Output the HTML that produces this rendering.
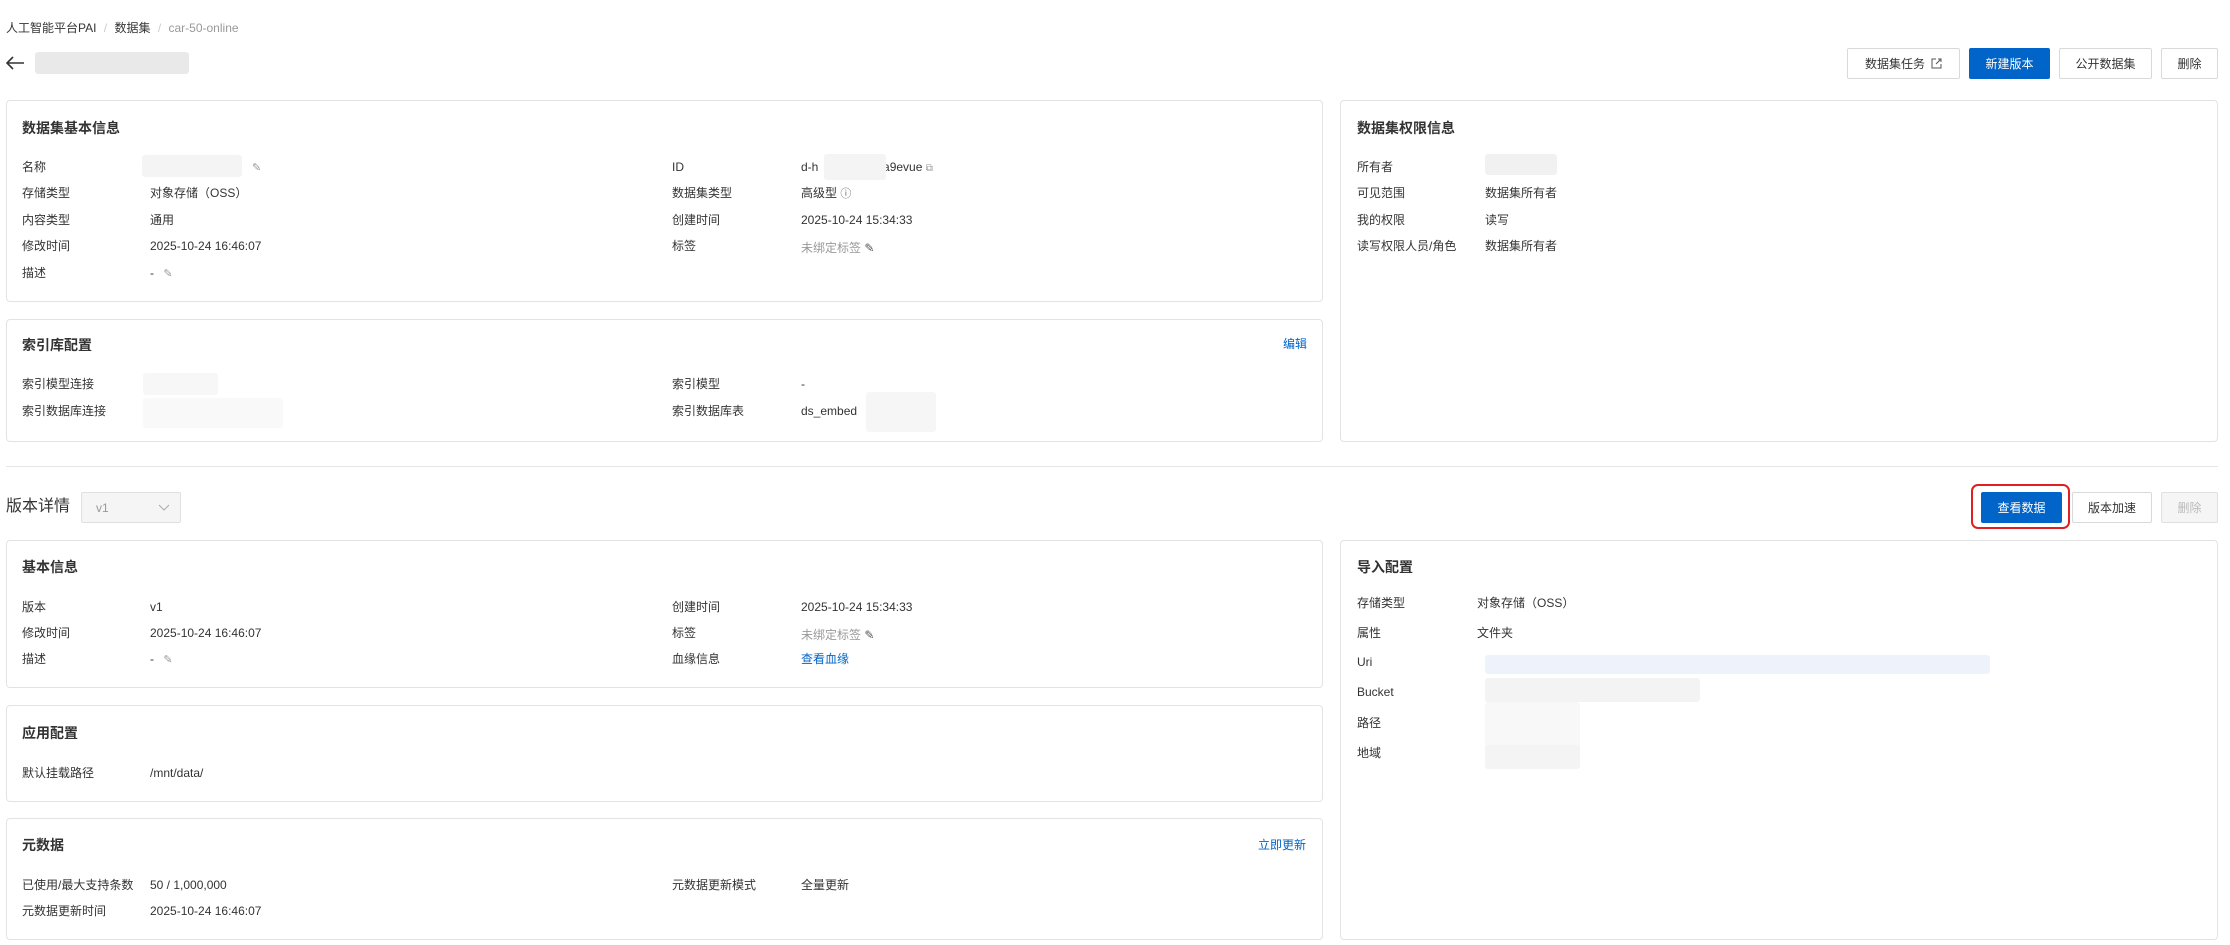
<!DOCTYPE html>
<html><head><meta charset="utf-8"><style>
*{margin:0;padding:0;box-sizing:border-box}
body{width:2230px;height:945px;background:#fff;position:relative;overflow:hidden;font-family:"Liberation Sans","Noto Sans CJK SC",sans-serif;font-size:12px;color:#333}
.a{position:absolute;white-space:nowrap;line-height:18px}
.card{position:absolute;border:1px solid #e3e3e3;border-radius:4px;background:#fff}
.t{position:absolute;font-size:14px;font-weight:bold;line-height:20px;color:#333;white-space:nowrap}
.btn{position:absolute;border:1px solid #d9d9d9;background:#fff;border-radius:2px;text-align:center;font-size:12px;color:#333;display:flex;align-items:center;justify-content:center;gap:6px}
.pri{background:#0064c8;border-color:#0064c8;color:#fff}
.blur{position:absolute;background:#f3f3f3;border-radius:3px}
.g{color:#999}
.l{color:#0064c8}
.pen{display:inline-block;margin-left:6px;color:#999;font-size:11px}
</style></head><body>
<div class="a" style="left:6px;top:19px;color:#333">人工智能平台PAI <span style="color:#ccc;margin:0 4px">/</span> 数据集 <span style="color:#ccc;margin:0 4px">/</span> <span class="g">car-50-online</span></div>
<svg class="a" style="left:4px;top:54px" width="22" height="18" viewBox="0 0 22 18"><path d="M20 9H3M9 3L3 9l6 6" fill="none" stroke="#333" stroke-width="1.6"/></svg>
<div class="blur" style="left:35px;top:52px;width:154px;height:22px;background:#e9e9e9"></div>

<div class="btn" style="left:1847px;top:48px;width:113px;height:31px">数据集任务 <svg width="11" height="11" viewBox="0 0 11 11"><path d="M5 1H1v9h9V6M7 1h3v3M10 1L5 6" fill="none" stroke="#555"/></svg></div>
<div class="btn pri" style="left:1969px;top:48px;width:81px;height:31px">新建版本</div>
<div class="btn" style="left:2059px;top:48px;width:93px;height:31px">公开数据集</div>
<div class="btn" style="left:2161px;top:48px;width:57px;height:31px">删除</div>

<div class="card" style="left:6px;top:100px;width:1317px;height:202px"></div>
<div class="t" style="left:22px;top:118px">数据集基本信息</div>
<div class="a" style="left:22px;top:158px">名称</div><div class="blur" style="left:142px;top:155px;width:100px;height:22px;background:#f4f4f4"></div><div class="a" style="left:246px;top:158px"><span class="pen">✎</span></div>
<div class="a" style="left:22px;top:184px">存储类型</div><div class="a" style="left:150px;top:184px">对象存储（OSS）</div>
<div class="a" style="left:22px;top:211px">内容类型</div><div class="a" style="left:150px;top:211px">通用</div>
<div class="a" style="left:22px;top:237px">修改时间</div><div class="a" style="left:150px;top:237px">2025-10-24 16:46:07</div>
<div class="a" style="left:22px;top:264px">描述</div><div class="a" style="left:150px;top:264px">- <span class="pen">✎</span></div>
<div class="a" style="left:672px;top:158px">ID</div><div class="a" style="left:801px;top:158px">d-h<span style="display:inline-block;width:58px"></span>ea9evue <span class="g" style="font-size:10px">⧉</span></div><div class="blur" style="left:824px;top:154px;width:62px;height:26px;background:#f4f4f4"></div>
<div class="a" style="left:672px;top:184px">数据集类型</div><div class="a" style="left:801px;top:184px">高级型 <span style="font-size:11px;color:#666">ⓘ</span></div>
<div class="a" style="left:672px;top:211px">创建时间</div><div class="a" style="left:801px;top:211px">2025-10-24 15:34:33</div>
<div class="a" style="left:672px;top:237px">标签</div><div class="a g" style="left:801px;top:239px">未绑定标签 <span style="color:#555">✎</span></div>

<div class="card" style="left:6px;top:319px;width:1317px;height:123px"></div>
<div class="t" style="left:22px;top:335px">索引库配置</div>
<div class="a l" style="left:1283px;top:335px">编辑</div>
<div class="a" style="left:22px;top:375px">索引模型连接</div><div class="blur" style="left:143px;top:373px;width:75px;height:22px;background:#f7f7f7"></div>
<div class="a" style="left:22px;top:402px">索引数据库连接</div><div class="blur" style="left:143px;top:398px;width:140px;height:30px;background:#f9f9f9"></div>
<div class="a" style="left:672px;top:375px">索引模型</div><div class="a" style="left:801px;top:375px">-</div>
<div class="a" style="left:672px;top:402px">索引数据库表</div><div class="a" style="left:801px;top:402px">ds_embed<span style="display:inline-block;width:68px"></span><span class="g" style="font-size:10px">⧉</span></div><div class="blur" style="left:866px;top:392px;width:70px;height:40px;background:#f6f6f6"></div>

<div class="card" style="left:1340px;top:100px;width:878px;height:342px"></div>
<div class="t" style="left:1357px;top:118px">数据集权限信息</div>
<div class="a" style="left:1357px;top:158px">所有者</div><div class="blur" style="left:1485px;top:154px;width:72px;height:21px;background:#f1f1f1"></div>
<div class="a" style="left:1357px;top:184px">可见范围</div><div class="a" style="left:1485px;top:184px">数据集所有者</div>
<div class="a" style="left:1357px;top:211px">我的权限</div><div class="a" style="left:1485px;top:211px">读写</div>
<div class="a" style="left:1357px;top:237px">读写权限人员/角色</div><div class="a" style="left:1485px;top:237px">数据集所有者</div>

<div style="position:absolute;left:6px;top:466px;width:2212px;height:1px;background:#e5e5e5"></div>

<div class="a" style="left:6px;top:496px;font-size:16px;line-height:22px">版本详情</div>
<div style="position:absolute;left:81px;top:492px;width:100px;height:31px;border:1px solid #e0e0e0;background:#f5f5f5;border-radius:2px"><span class="a g" style="left:14px;top:6px">v1</span><svg style="position:absolute;left:76px;top:11px" width="12" height="8"><path d="M1 1l5 5 5-5" fill="none" stroke="#aaa"/></svg></div>

<div style="position:absolute;left:1971px;top:484px;width:99px;height:45px;border:2px solid #e02020;border-radius:7px"></div>
<div class="btn pri" style="left:1981px;top:492px;width:81px;height:31px">查看数据</div>
<div class="btn" style="left:2072px;top:492px;width:80px;height:31px">版本加速</div>
<div class="btn" style="left:2161px;top:492px;width:57px;height:31px;background:#f5f5f5;color:#bbb;border-color:#e0e0e0">删除</div>

<div class="card" style="left:6px;top:540px;width:1317px;height:148px"></div>
<div class="t" style="left:22px;top:557px">基本信息</div>
<div class="a" style="left:22px;top:598px">版本</div><div class="a" style="left:150px;top:598px">v1</div>
<div class="a" style="left:22px;top:624px">修改时间</div><div class="a" style="left:150px;top:624px">2025-10-24 16:46:07</div>
<div class="a" style="left:22px;top:650px">描述</div><div class="a" style="left:150px;top:650px">- <span class="pen">✎</span></div>
<div class="a" style="left:672px;top:598px">创建时间</div><div class="a" style="left:801px;top:598px">2025-10-24 15:34:33</div>
<div class="a" style="left:672px;top:624px">标签</div><div class="a g" style="left:801px;top:626px">未绑定标签 <span style="color:#555">✎</span></div>
<div class="a" style="left:672px;top:650px">血缘信息</div><div class="a l" style="left:801px;top:650px">查看血缘</div>

<div class="card" style="left:6px;top:705px;width:1317px;height:97px"></div>
<div class="t" style="left:22px;top:723px">应用配置</div>
<div class="a" style="left:22px;top:764px">默认挂载路径</div><div class="a" style="left:150px;top:764px">/mnt/data/</div>

<div class="card" style="left:6px;top:818px;width:1317px;height:122px"></div>
<div class="t" style="left:22px;top:835px">元数据</div>
<div class="a l" style="left:1258px;top:836px">立即更新</div>
<div class="a" style="left:22px;top:876px">已使用/最大支持条数</div><div class="a" style="left:150px;top:876px">50 / 1,000,000</div>
<div class="a" style="left:22px;top:902px">元数据更新时间</div><div class="a" style="left:150px;top:902px">2025-10-24 16:46:07</div>
<div class="a" style="left:672px;top:876px">元数据更新模式</div><div class="a" style="left:801px;top:876px">全量更新</div>

<div class="card" style="left:1340px;top:540px;width:878px;height:400px"></div>
<div class="t" style="left:1357px;top:557px">导入配置</div>
<div class="a" style="left:1357px;top:594px">存储类型</div><div class="a" style="left:1477px;top:594px">对象存储（OSS）</div>
<div class="a" style="left:1357px;top:624px">属性</div><div class="a" style="left:1477px;top:624px">文件夹</div>
<div class="a" style="left:1357px;top:653px">Uri</div><div class="blur" style="left:1485px;top:655px;width:505px;height:19px;background:#eef2fa"></div>
<div class="a" style="left:1357px;top:683px">Bucket</div><div class="blur" style="left:1485px;top:678px;width:215px;height:24px;background:#f3f3f3"></div>
<div class="a" style="left:1357px;top:714px">路径</div><div class="blur" style="left:1485px;top:702px;width:95px;height:66px;background:#f8f8f8"></div>
<div class="a" style="left:1357px;top:744px">地域</div><div class="blur" style="left:1485px;top:745px;width:95px;height:24px;background:#f4f4f4"></div>
</body></html>
